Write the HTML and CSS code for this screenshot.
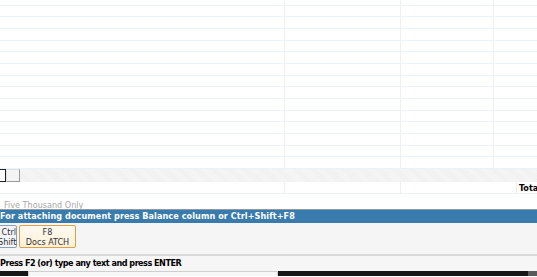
FILE: index.html
```html
<!DOCTYPE html>
<html lang="en">
<head>
  <meta charset="UTF-8" />
  <title>Voucher Entry</title>
  <link rel="stylesheet" href="styles.css">
</head>
<body>
  <div class="screen">
    <div class="grid">
      <div class="rows">
        <div class="row"><span></span><span></span><span></span><span></span></div>
        <div class="row"><span></span><span></span><span></span><span></span></div>
        <div class="row"><span></span><span></span><span></span><span></span></div>
        <div class="row"><span></span><span></span><span></span><span></span></div>
        <div class="row"><span></span><span></span><span></span><span></span></div>
        <div class="row"><span></span><span></span><span></span><span></span></div>
        <div class="row"><span></span><span></span><span></span><span></span></div>
        <div class="row"><span></span><span></span><span></span><span></span></div>
        <div class="row"><span></span><span></span><span></span><span></span></div>
        <div class="row"><span></span><span></span><span></span><span></span></div>
        <div class="row"><span></span><span></span><span></span><span></span></div>
        <div class="row"><span></span><span></span><span></span><span></span></div>
        <div class="row"><span></span><span></span><span></span><span></span></div>
        <div class="row"><span></span><span></span><span></span><span></span></div>
        <div class="row"><span></span><span></span><span></span><span></span></div>
      </div>
    </div>

    <!-- horizontal scroller -->
    <div class="scroller">
      <span class="scroll-knob"></span>
      <span class="scroll-btn"></span>
    </div>

    <div class="total-row">
      <span></span><span></span><span class="total-cell"></span><span class="total-label">Total</span>
    </div>

    <div class="amount-words">Five Thousand Only</div>

    <div class="hint-bar">For attaching document press Balance column or Ctrl+Shift+F8</div>

    <div class="toolbar">
      <button class="key key-mod">Ctrl<br>Shift</button>
      <button class="key key-f8">F8<br>Docs ATCH</button>
    </div>

    <div class="status">Press F2 (or) type any text and press ENTER</div>

    <div class="taskbar">
      <span class="tb-dark tb-left"></span>
      <span class="tb-light"></span>
      <span class="tb-dark tb-main"></span>
      <span class="tb-gray"></span>
    </div>
  </div>
</body>
</html>
```

FILE: styles.css
```css
html, body {
  margin: 0;
  padding: 0;
  background: #fff;
}
.screen {
  width: 537px;
  height: 277px;
  overflow: hidden;
  display: flex;
  flex-direction: column;
  font-family: "DejaVu Sans Condensed", "DejaVu Sans", sans-serif;
  font-size: 9px;
  color: #222;
}
.grid {
  height: 169px;
  overflow: hidden;
  flex: none;
}
.rows {
  margin-top: -6px;
}
.row {
  display: grid;
  grid-template-columns: 284px 116px 93px 1fr;
  height: 11.67px;
  box-sizing: border-box;
  border-bottom: 1px solid #edf2f9;
}
.row span + span {
  border-left: 1px solid #e9f0fa;
}
.scroller {
  height: 13px;
  flex: none;
  display: flex;
  background: #f3f3f3;
  background-image: repeating-linear-gradient(45deg, #f6f6f6 0 1px, #f0f0f0 1px 2px);
}
.scroll-knob {
  width: 5px;
  height: 11px;
  border: 1px solid #222;
  border-left: none;
  background: #fff;
}
.scroll-btn {
  width: 12px;
  height: 11px;
  border: 1px solid #9a9a9a;
  border-top-color: #e0e0e0;
  border-left-color: #e0e0e0;
  background: #f4f4f4;
}
.total-row {
  height: 12px;
  flex: none;
  display: grid;
  grid-template-columns: 284px 116px 116px 1fr;
  box-sizing: border-box;
  border-bottom: 1px solid #edf2f9;
}
.total-row span + span {
  border-left: 1px solid #e9f0fa;
}
.total-label {
  font-weight: bold;
  color: #000;
  padding-left: 2px;
  line-height: 12px;
  white-space: nowrap;
}
.amount-words {
  height: 15px;
  flex: none;
  padding-left: 4px;
  color: #a8a8a8;
  line-height: 22px;
}
.hint-bar {
  height: 13px;
  flex: none;
  border-top: 1px solid #8f9aa5;
  background: #3a7bae;
  color: #fff;
  font-weight: bold;
  line-height: 13px;
  letter-spacing: 0.08px;
  white-space: nowrap;
}
.toolbar {
  height: 33px;
  flex: none;
  background: #f5f5f5;
  display: flex;
  align-items: flex-start;
  gap: 2px;
  padding-top: 2px;
  box-sizing: border-box;
  border-bottom: 2px solid #d9d9d9;
}
.key {
  font: inherit;
  color: #333;
  line-height: 10px;
  padding: 0;
  height: 23px;
  border-radius: 2px;
}
.key-mod {
  width: 20px;
  margin-left: -3px;
  border: 1px solid #8aa0b8;
  background: #f3f5f8;
  text-align: right;
}
.key-f8 {
  width: 57px;
  border: 1px solid #e0a040;
  background: linear-gradient(#fffaf0, #fdf0d8);
}
.status {
  height: 15px;
  flex: none;
  background: #f6f6f6;
  font-weight: bold;
  color: #000;
  line-height: 15px;
  letter-spacing: -0.5px;
  white-space: nowrap;
}
.taskbar {
  height: 5px;
  flex: none;
  display: flex;
}
.tb-dark {
  background: #171717;
}
.tb-left {
  width: 28px;
}
.tb-light {
  width: 248px;
  background: #f7f7f7;
  border: 1px solid #cfcfcf;
  border-bottom: none;
}
.tb-main {
  width: 250px;
}
.tb-gray {
  flex: 1;
  background: #5a5a5a;
}
```
